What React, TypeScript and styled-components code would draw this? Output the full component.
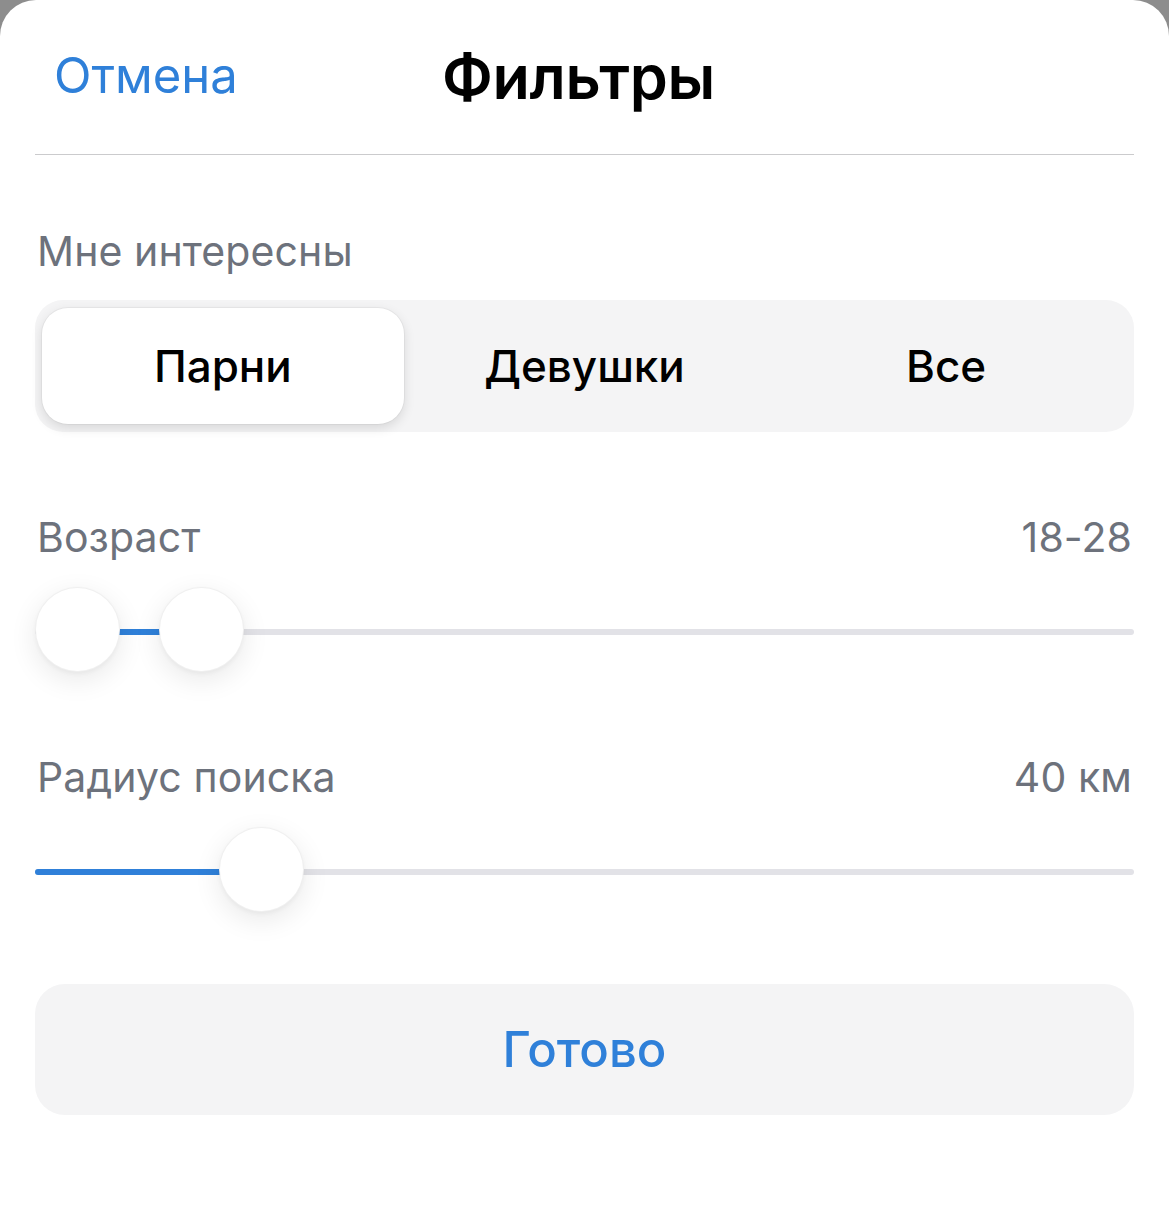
import React, { useState } from 'react';
import styled, { createGlobalStyle } from 'styled-components';

const GlobalStyle = createGlobalStyle`
  html, body {
    margin: 0;
    padding: 0;
    background: #8d8d8d;
  }
  body {
    font-family: Inter, "Noto Sans", "Liberation Sans", sans-serif;
    -webkit-font-smoothing: antialiased;
  }
`;

const BLUE = '#2f80d9';
const THUMB = 85;

const Sheet = styled.div`
  background: #ffffff;
  border-radius: 36px 36px 0 0;
  min-height: 1217px;
  box-sizing: border-box;
  padding: 0 35px;
`;

const Header = styled.header`
  display: grid;
  grid-template-columns: 1fr auto 1fr;
  align-items: center;
  height: 155px;
  border-bottom: 1px solid #cbcbcd;
  box-sizing: border-box;
`;

const CancelButton = styled.button`
  justify-self: start;
  border: none;
  background: none;
  padding: 0 0 0 19px;
  margin-top: -4px;
  font-family: inherit;
  font-size: 49px;
  font-weight: 400;
  color: ${BLUE};
  cursor: pointer;
`;

const Title = styled.h1`
  margin: 0 0 0 -12px;
  font-size: 61px;
  font-weight: 600;
  letter-spacing: -0.3px;
  color: #000;
`;

const Section = styled.section<{ top: number }>`
  margin-top: ${p => p.top}px;
`;

const LabelRow = styled.div`
  display: flex;
  justify-content: space-between;
  align-items: center;
  padding: 0 2px;
  height: 52px;
`;

const Label = styled.span`
  font-size: 41px;
  font-weight: 400;
  color: #6d727c;
  letter-spacing: 0.1px;
`;

const Segmented = styled.div`
  display: grid;
  grid-template-columns: repeat(3, 1fr);
  background: #f4f4f5;
  border-radius: 28px;
  padding: 8px 7px;
  height: 132px;
  box-sizing: border-box;
  margin-top: 23px;
`;

const Segment = styled.button<{ active: boolean }>`
  border: none;
  border-radius: 26px;
  font-family: inherit;
  font-size: 44px;
  font-weight: 500;
  color: #000;
  cursor: pointer;
  background: ${p => (p.active ? '#ffffff' : 'transparent')};
  box-shadow: ${p =>
    p.active ? '0 4px 12px rgba(0,0,0,0.12), 0 0 0 1px rgba(0,0,0,0.04)' : 'none'};
`;

const SliderBox = styled.div`
  position: relative;
  height: ${THUMB}px;
  margin-top: 24px;
`;

const Track = styled.div`
  position: absolute;
  left: 0;
  right: 0;
  top: 42px;
  height: 6px;
  border-radius: 3px;
  background: #e2e2e7;
`;

const Fill = styled.div`
  position: absolute;
  top: 0;
  bottom: 0;
  border-radius: 3px;
  background: ${BLUE};
`;

const Thumb = styled.div`
  position: absolute;
  top: 0;
  width: ${THUMB}px;
  height: ${THUMB}px;
  border-radius: 50%;
  background: #fff;
  box-sizing: border-box;
  border: 1px solid rgba(0, 0, 0, 0.06);
  box-shadow: 0 8px 28px rgba(0, 0, 0, 0.09), 0 2px 4px rgba(0, 0, 0, 0.04);
`;

const DoneButton = styled.button`
  display: block;
  width: 100%;
  height: 131px;
  margin-top: 72px;
  border: none;
  border-radius: 30px;
  background: #f4f4f5;
  font-family: inherit;
  font-size: 49px;
  font-weight: 500;
  color: ${BLUE};
  cursor: pointer;
`;

const WIDTH = 1098;
const travel = WIDTH - THUMB;

// Centre of a thumb, in px from the track's left edge
const pos = (v: number, min: number, max: number) =>
  THUMB / 2 + ((v - min) / (max - min)) * travel;

const RangeSlider: React.FC<{ from: number; to: number; min: number; max: number }> = ({
  from,
  to,
  min,
  max,
}) => {
  const a = pos(from, min, max);
  const b = pos(to, min, max);
  return (
    <SliderBox>
      <Track>
        <Fill style={{ left: a, width: b - a }} />
      </Track>
      <Thumb style={{ left: a - THUMB / 2 }} />
      <Thumb style={{ left: b - THUMB / 2 }} />
    </SliderBox>
  );
};

const SingleSlider: React.FC<{ value: number; min: number; max: number }> = ({
  value,
  min,
  max,
}) => {
  const c = pos(value, min, max);
  return (
    <SliderBox>
      <Track>
        <Fill style={{ left: 0, width: c }} />
      </Track>
      <Thumb style={{ left: c - THUMB / 2 }} />
    </SliderBox>
  );
};

const options = ['Парни', 'Девушки', 'Все'];

export default function App() {
  const [gender, setGender] = useState(0);

  return (
    <>
      <GlobalStyle />
      <Sheet>
        <Header>
          <CancelButton>Отмена</CancelButton>
          <Title>Фильтры</Title>
          <span />
        </Header>

        <Section top={70}>
          <LabelRow>
            <Label>Мне интересны</Label>
          </LabelRow>
          <Segmented>
            {options.map((o, i) => (
              <Segment key={o} active={gender === i} onClick={() => setGender(i)}>
                {o}
              </Segment>
            ))}
          </Segmented>
        </Section>

        <Section top={79}>
          <LabelRow>
            <Label>Возраст</Label>
            <Label>18-28</Label>
          </LabelRow>
          <RangeSlider from={18} to={28} min={18} max={100} />
        </Section>

        <Section top={79}>
          <LabelRow>
            <Label>Радиус поиска</Label>
            <Label>40 км</Label>
          </LabelRow>
          <SingleSlider value={40} min={0} max={220} />
        </Section>

        <DoneButton>Готово</DoneButton>
      </Sheet>
    </>
  );
}
